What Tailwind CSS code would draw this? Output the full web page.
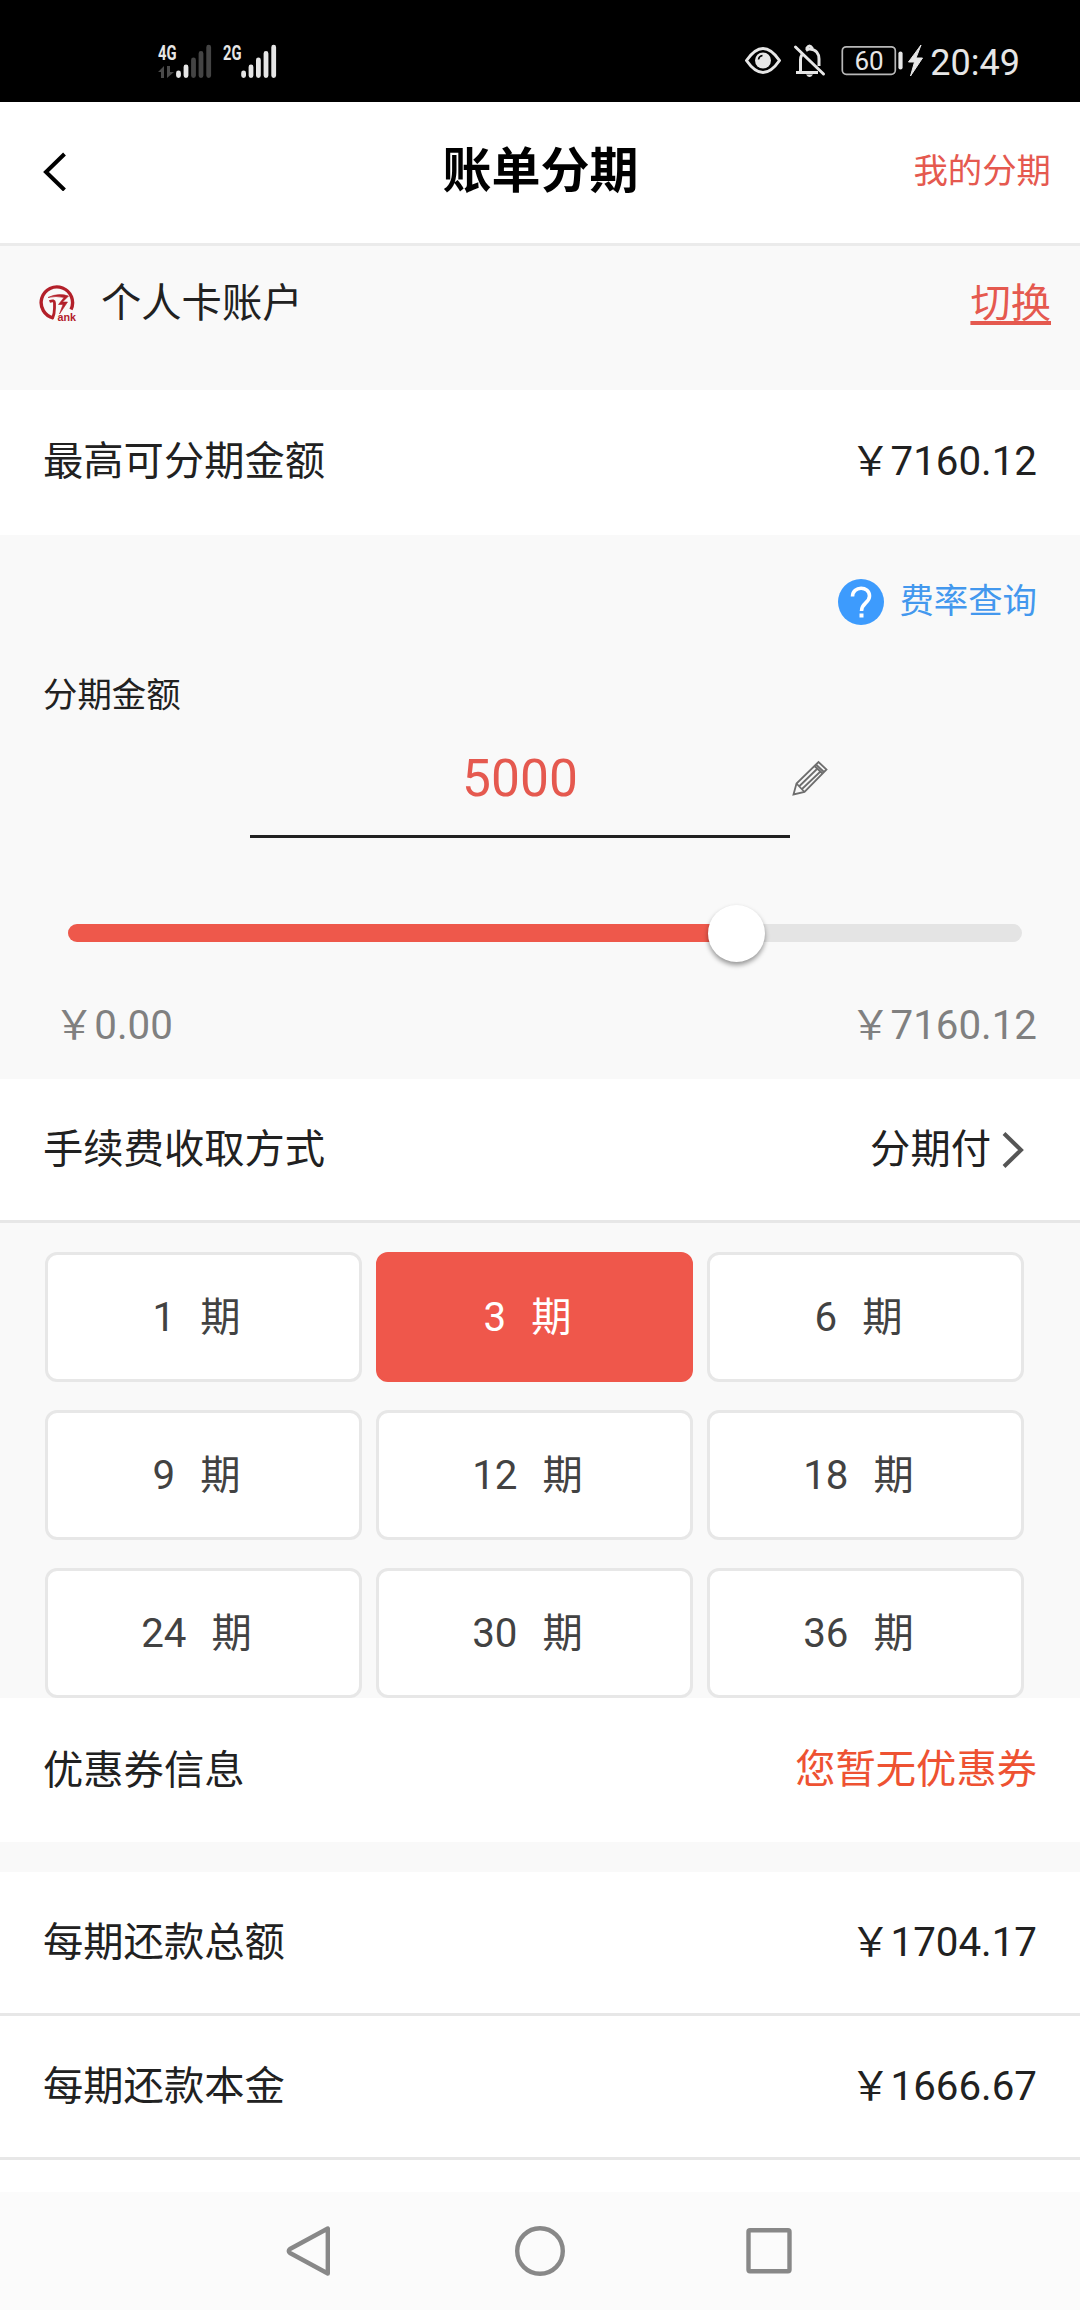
<!DOCTYPE html>
<html lang="zh-CN">
<head>
    <meta charset="UTF-8">
    <meta name="viewport" content="width=device-width, initial-scale=1.0">
    <script src="https://cdn.jsdelivr.net/npm/@tailwindcss/browser@4"></script>
    <title>账单分期</title>
</head>
<body class="bg-[#f9f9f9] font-[Roboto,'Noto_Sans_CJK_SC',sans-serif] text-[40.3px] leading-[60px] text-[#212121]">
    <div class="w-[1080px] h-[2310px] flex flex-col overflow-hidden">
        <!-- status bar -->
        <div class="h-[102px] shrink-0 bg-black flex justify-between items-end pb-[17px] pl-[155px] pr-[60px] text-[#e6e6e6]">
            <svg class="h-[45px] w-[125px]" viewBox="155 40 125 45" stroke-width="4.8" stroke-linecap="round">
                <g fill="#e6e6e6" font-family="Roboto" font-weight="700" font-size="20">
                    <text x="158" y="60" textLength="18.5" lengthAdjust="spacingAndGlyphs">4G</text>
                    <text x="223" y="60" textLength="18.5" lengthAdjust="spacingAndGlyphs">2G</text>
                </g>
                <path d="M178.5 73v2.6M186 67v8.6" stroke="#e6e6e6"/>
                <path d="M193.5 60v15.6M201 53.4v22.2M208.7 47.2v28.4" stroke="#444"/>
                <path d="M243.6 73v2.6M251 67v8.6M258.4 60v15.6M266 53.4v22.2M273.7 47.2v28.4" stroke="#e6e6e6"/>
                <path d="M158 72l6-6v12h-3v-6zM167 66v12l7-6h-4v-6z" fill="#4a4a4a"/>
            </svg>
            <div class="flex items-center">
                <svg class="h-[45px] w-[185px]" viewBox="743 40 185 45" fill="none" stroke="#e6e6e6" stroke-width="3">
                    <path d="M746.5 61.5Q763 37.5 779.5 61.5Q763 85.5 746.5 61.5z" stroke-linejoin="round"/>
                    <circle cx="763" cy="61.5" r="8" fill="#e6e6e6" stroke="none"/>
                    <path d="M758.5 60.5q.5-3.5 4-4" stroke="#000" stroke-width="1.6"/>
                    <path d="M796 73.5h22M800.5 72V61q0-3 1.5-5.5M806 51.5q3-1.8 4-1.5c6 .5 9 5 9 10v7" />
                    <path d="M807 50v-1q2.5-4 5 0v1" />
                    <path d="M795.5 48l28 27" stroke-linecap="round"/>
                    <path d="M806 75.5h7q-3.5 5-7 0z" fill="#e6e6e6" stroke="none"/>
                    <rect x="842.3" y="47.8" width="53" height="27.5" rx="4" stroke="#b8b8b8" stroke-width="1.7"/>
                    <path d="M900.5 54.5v14" stroke-width="4.2" stroke-linecap="round"/>
                    <path d="M921 46l-12.5 17h6l-4 14 12-18h-6.5z" fill="#e6e6e6" stroke="#e6e6e6" stroke-width="1"/>
                    <text x="854.5" y="71" fill="#e6e6e6" stroke="none" font-family="Roboto" font-size="26">60</text>
                </svg>
                <span class="text-[36px] leading-[43px] pt-[5px] ml-[2px]">20:49</span>
            </div>
        </div>
        <!-- header -->
        <header class="h-[144px] shrink-0 bg-white border-b-3 border-[#ebebeb] grid grid-cols-3 items-center pl-[42px] pr-[29px] pb-[3px]">
            <svg class="w-6 h-10" viewBox="0 0 24 40" fill="none" stroke="#000" stroke-width="4"><path d="M22.5 3L4 21l18.5 18"/></svg>
            <h1 class="text-[49px] font-bold text-black text-center -ml-3 pt-[2px] whitespace-nowrap">账单分期</h1>
            <a class="text-[34.4px] text-[#e5594f] text-right">我的分期</a>
        </header>
        <!-- account -->
        <section class="h-[144px] shrink-0 flex items-start pt-[28px] pl-[38px] pr-[29px]">
            <svg class="w-10 h-10 mt-[10px]" viewBox="0 0 40 40" fill="none" stroke="#b3202a">
                <path d="M15.5 34A15.7 15.7 0 1 1 33 25.5" stroke-width="3.4"/>
                <path d="M10 13.5Q20 8.5 30.5 12L24.5 18H29.5L21.5 30L25 20.5H20.5L26 13.5Q18 11.5 10 13.5z" fill="#b3202a" stroke-width=".6"/>
                <path d="M11.5 17.5Q16.5 15.5 16.5 19V24Q16.5 30 14.5 34.5" stroke-width="2.8"/>
                <text x="19.5" y="36.5" fill="#b3202a" stroke="none" font-family="Liberation Sans" font-weight="700" font-size="10" textLength="18.5" lengthAdjust="spacingAndGlyphs">ank</text>
            </svg>
            <span class="ml-[23px]">个人卡账户</span>
            <a class="ml-auto text-[#e5594f] underline decoration-4 underline-offset-[4px]">切换</a>
        </section>
        <section class="h-[145px] shrink-0 bg-white flex justify-between items-center px-[43px] pb-[2px]">
            <span>最高可分期金额</span>
            <span>￥7160.12</span>
        </section>
        <!-- amount -->
        <section class="h-[544px] shrink-0 flex flex-col px-[43px]">
            <div class="flex justify-end items-center gap-[15px] mt-[37px] h-[60px] text-[34.4px] text-[#4398ee]">
                <svg class="w-[46px] h-[46px]" viewBox="0 0 46 46">
                    <circle cx="23" cy="23" r="23" fill="#3d9bfd"/>
                    <path d="M14.5 17.5C14.5 6.5 31.5 6.5 31.5 17C31.5 24 23.5 24 23.5 32" fill="none" stroke="#fff" stroke-width="3.6"/>
                    <rect x="21.5" y="34.5" width="4" height="4" fill="#fff"/>
                </svg>
                <span class="pb-[2px]">费率查询</span>
            </div>
            <div class="text-[34.4px] mt-[33px]">分期金额</div>
            <div class="flex mt-[13px] ml-[207px]">
                <div class="w-[540px] h-[100px] border-b-3 border-[#212121] text-center text-[51.5px] leading-[82px] text-[#e5594f]">5000</div>
                <svg class="w-10 h-10 mt-5" viewBox="0 0 40 40" fill="none" stroke="#6e6e6e" stroke-width="1.8">
                    <path d="M3.5 36.5L6.5 25.5L28.5 4L36.5 11.5L14.5 34zM6.5 25.5L14.5 34M24.5 8L32.5 15.5M26 6.5L34 14M9 28.5L28 10M12 31L31 13"/>
                </svg>
            </div>
            <div class="ml-[25px] mr-[15px] mt-[86px] h-[18px] rounded-full bg-[#e4e4e4] flex items-center">
                <div class="h-full rounded-l-full bg-[#ee584b]" style="width: 69.83%"></div>
                <div class="w-[57px] h-[57px] -ml-[26px] shrink-0 rounded-full bg-white shadow-[0_3px_5px_rgba(0,0,0,0.4)]"></div>
            </div>
            <div class="flex justify-between mt-[54px] pl-[11px] text-[#808080]">
                <span>￥0.00</span>
                <span>￥7160.12</span>
            </div>
        </section>
        <section class="h-[144px] shrink-0 bg-white border-b-3 border-[#e7e7e7] flex items-center px-[43px]">
            <span>手续费收取方式</span>
            <span class="ml-auto">分期付</span>
            <svg class="w-6 h-9 ml-[10px] mr-3" viewBox="0 0 24 36" fill="none" stroke="#555" stroke-width="4"><path d="M3 1.5L20 18L3 34.5"/></svg>
        </section>
        <!-- periods -->
        <section class="shrink-0 h-[475px] pt-[29px] pl-[45px] pr-[56px] grid grid-cols-3 grid-rows-3 gap-x-[14px] gap-y-[28px] text-[#424242]">
            <button class="flex justify-center items-center gap-[25px] pr-[14px] pt-px bg-white border-3 border-[#e7e7e7] rounded-xl"><span>1</span><span>期</span></button>
            <button class="flex justify-center items-center gap-[25px] pr-[14px] pt-px bg-[#ef574b] text-white border-3 border-[#ef574b] rounded-xl"><span>3</span><span>期</span></button>
            <button class="flex justify-center items-center gap-[25px] pr-[14px] pt-px bg-white border-3 border-[#e7e7e7] rounded-xl"><span>6</span><span>期</span></button>
            <button class="flex justify-center items-center gap-[25px] pr-[14px] pt-[2px] bg-white border-3 border-[#e7e7e7] rounded-xl"><span>9</span><span>期</span></button>
            <button class="flex justify-center items-center gap-[25px] pr-[14px] pt-[2px] bg-white border-3 border-[#e7e7e7] rounded-xl"><span>12</span><span>期</span></button>
            <button class="flex justify-center items-center gap-[25px] pr-[14px] pt-[2px] bg-white border-3 border-[#e7e7e7] rounded-xl"><span>18</span><span>期</span></button>
            <button class="flex justify-center items-center gap-[25px] pr-[14px] pt-px bg-white border-3 border-[#e7e7e7] rounded-xl"><span>24</span><span>期</span></button>
            <button class="flex justify-center items-center gap-[25px] pr-[14px] pt-px bg-white border-3 border-[#e7e7e7] rounded-xl"><span>30</span><span>期</span></button>
            <button class="flex justify-center items-center gap-[25px] pr-[14px] pt-px bg-white border-3 border-[#e7e7e7] rounded-xl"><span>36</span><span>期</span></button>
        </section>
        <section class="h-[144px] shrink-0 bg-white flex justify-between items-center px-[43px]">
            <span class="pt-px">优惠券信息</span>
            <span class="text-[#ee5232]">您暂无优惠券</span>
        </section>
        <!-- repayment -->
        <section class="h-[144px] shrink-0 mt-[30px] bg-white border-b-3 border-[#e7e7e7] flex justify-between items-center px-[43px]">
            <span>每期还款总额</span>
            <span>￥1704.17</span>
        </section>
        <section class="h-[144px] shrink-0 bg-white border-b-3 border-[#e7e7e7] flex justify-between items-center px-[43px]">
            <span>每期还款本金</span>
            <span>￥1666.67</span>
        </section>
        <div class="h-[32px] shrink-0 bg-white"></div>
        <!-- system navigation -->
        <nav class="h-[118px] shrink-0 bg-[#fbfbfb] flex pt-[33px] pl-[284px]">
            <svg class="w-[510px] h-[52px]" viewBox="284 2225 510 52" fill="none" stroke="#888" stroke-width="4.4" stroke-linejoin="round">
                <path d="M327.8 2228.5v45L290 2253q-2.5-2 0-4z"/>
                <circle cx="540" cy="2251" r="22.8"/>
                <rect x="748.5" y="2230.2" width="41" height="41" rx="1.5"/>
            </svg>
        </nav>
    </div>
</body>
</html>
